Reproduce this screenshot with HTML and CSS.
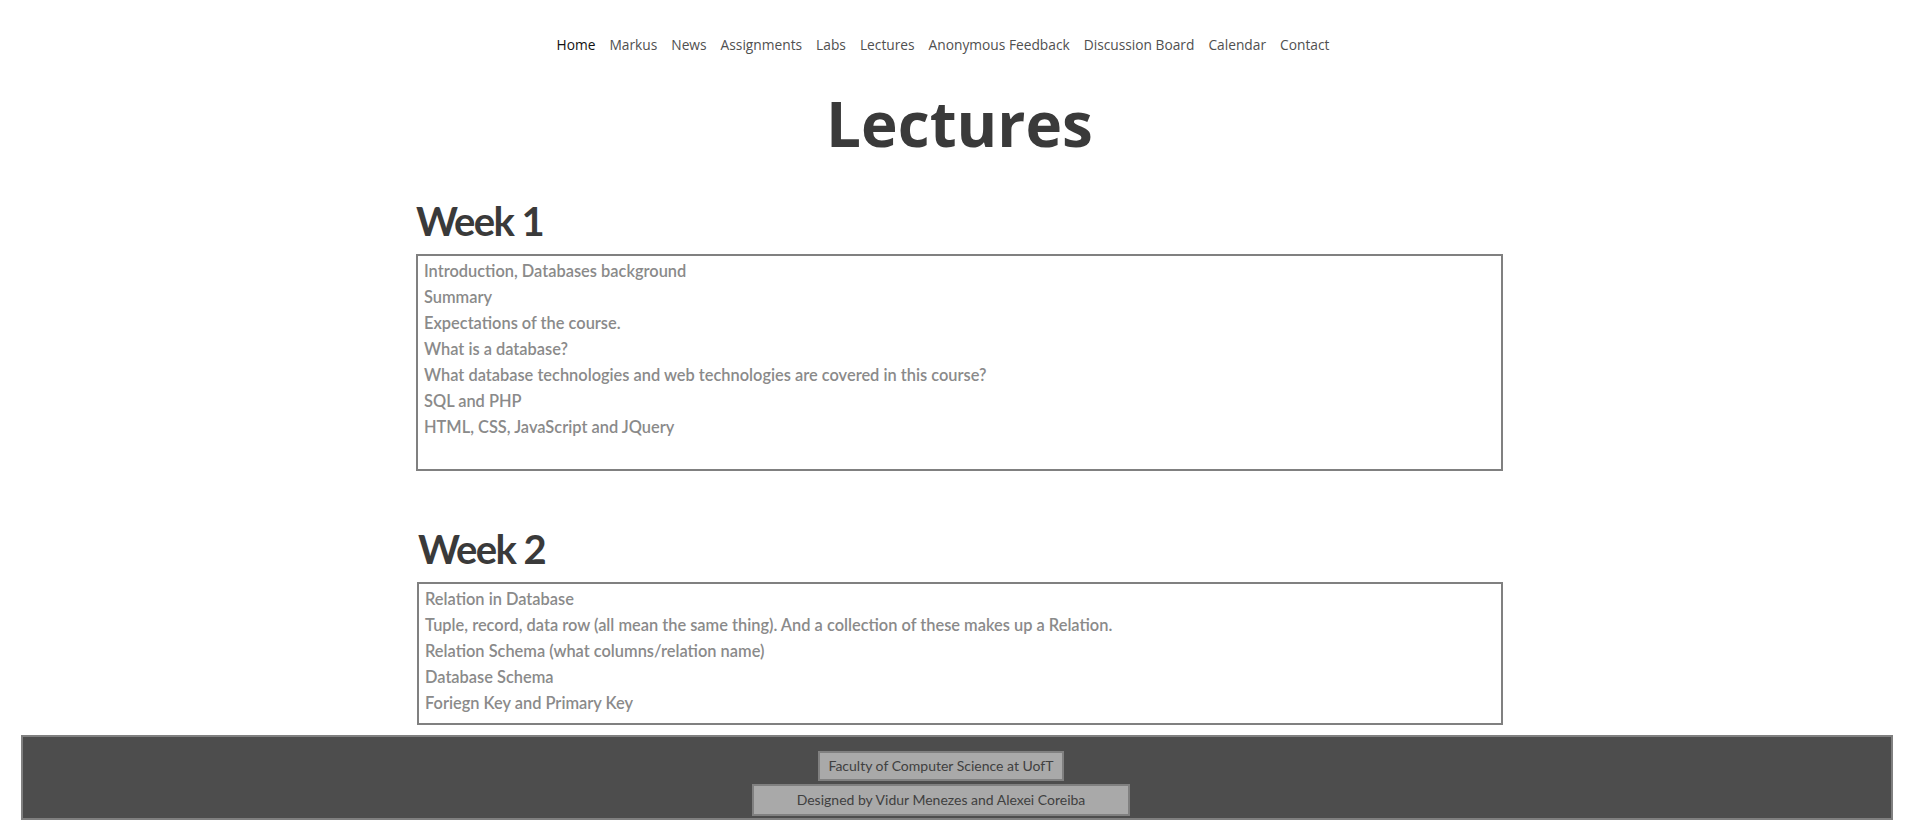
FILE: index.html
```html
<!DOCTYPE html>
<html lang="en">
<head>
<meta charset="utf-8">
<title>Lectures</title>
<link rel="stylesheet" href="styles.css">
</head>
<body>
<nav class="topnav">
  <a class="nav-link active" href="#">Home</a>
  <a class="nav-link" href="#">Markus</a>
  <a class="nav-link" href="#">News</a>
  <a class="nav-link" href="#">Assignments</a>
  <a class="nav-link" href="#">Labs</a>
  <a class="nav-link" href="#">Lectures</a>
  <a class="nav-link" href="#">Anonymous Feedback</a>
  <a class="nav-link" href="#">Discussion Board</a>
  <a class="nav-link" href="#">Calendar</a>
  <a class="nav-link" href="#">Contact</a>
</nav>
<main class="main">
  <h1 class="page-title">Lectures</h1>
  <section class="week">
    <h2 class="week-title">Week 1</h2>
    <div class="week-box week-box-tall">
      <p class="item">Introduction, Databases background</p>
      <p class="item">Summary</p>
      <p class="item">Expectations of the course.</p>
      <p class="item">What is a database?</p>
      <p class="item">What database technologies and web technologies are covered in this course?</p>
      <p class="item">SQL and PHP</p>
      <p class="item">HTML, CSS, JavaScript and JQuery</p>
    </div>
  </section>
  <section class="week week-second">
    <h2 class="week-title week-title-shift">Week 2</h2>
    <div class="week-box week-box-shift">
      <p class="item">Relation in Database</p>
      <p class="item">Tuple, record, data row (all mean the same thing). And a collection of these makes up a Relation.</p>
      <p class="item">Relation Schema (what columns/relation name)</p>
      <p class="item">Database Schema</p>
      <p class="item">Foriegn Key and Primary Key</p>
    </div>
  </section>
</main>
<footer class="footer">
  <div class="foot-box">Faculty of Computer Science at UofT</div>
  <div class="foot-box foot-box-wide">Designed by Vidur Menezes and Alexei Coreiba</div>
</footer>
</body>
</html>
```
FILE: styles.css
```css
* { box-sizing: border-box; }
body {
  margin: 8px;
  background: #ffffff;
  font-family: "Lato", "Open Sans", sans-serif;
}
.topnav {
  display: flex;
  justify-content: center;
  gap: 14px;
  padding: 28px 28px 0 0;
  font-family: "Open Sans", sans-serif;
  font-size: 13.75px;
  line-height: 18px;
}
.nav-link {
  color: #505050;
  text-decoration: none;
}
.nav-link.active { color: #111111; }
.main {
  width: 1092px;
  margin: 0 auto;
  padding-left: 5px;
}
.page-title {
  margin: 27px 0 0;
  text-align: center;
  font-family: "Open Sans", sans-serif;
  font-weight: 700;
  font-size: 62px;
  line-height: 84px;
  color: #3a3a3a;
}
.week-title {
  margin: 32px 0 9px;
  font-family: "Lato", sans-serif;
  font-weight: 700;
  font-size: 40px;
  line-height: 48px;
  letter-spacing: -1.6px;
  color: #3a3a3a;
}
.week-second .week-title { margin-top: 54px; }
.week-title-shift { padding-left: 2px; }
.week-box {
  border: 2px solid #808080;
  padding: 2px 6px 7px;
}
.week-box-shift { margin-left: 1px; }
.week-box-tall { padding-bottom: 29px; }
.item {
  margin: 0;
  font-family: "Lato", sans-serif;
  font-weight: 600;
  font-size: 16.4px;
  line-height: 26px;
  color: #8a8a8a;
}
.footer {
  margin: 10px 13px 0;
  border: 2px solid #808080;
  background: #4d4d4d;
  display: flex;
  flex-direction: column;
  align-items: center;
  gap: 3px;
  padding: 14px 32px 2px 0;
  height: 85px;
}
.foot-box {
  background: #a9a9a9;
  border: 2px solid #808080;
  color: #404040;
  font-family: "Lato", sans-serif;
  font-size: 14px;
  line-height: 18px;
  padding: 4px 8px;
}
.foot-box-wide { padding: 5px 43px; }
```
